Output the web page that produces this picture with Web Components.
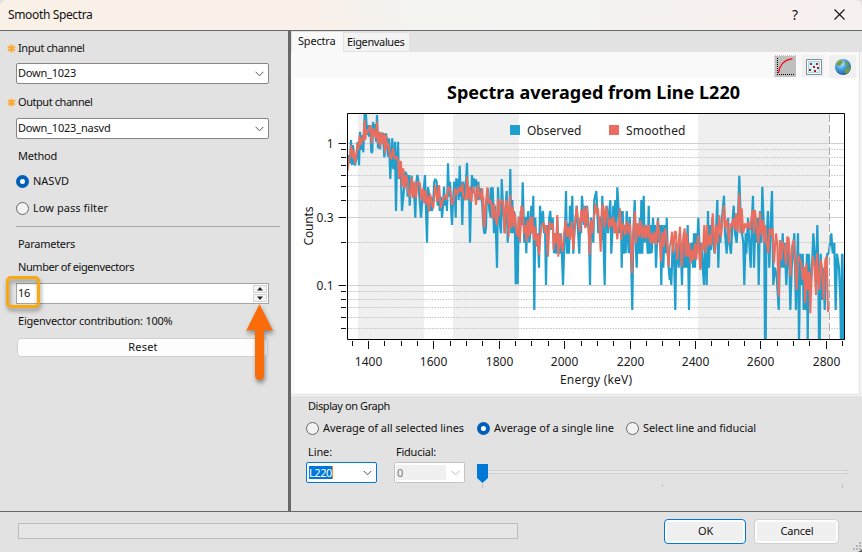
<!DOCTYPE html>
<html lang="en">
<head>
<meta charset="utf-8">
<title>Smooth Spectra</title>
<style>
  html, body { margin: 0; height: 100%; overflow: hidden; }
  body { font: 11px/14px "Noto Sans", "Open Sans", sans-serif; color: #111; background: #e2e2e2; }
</style>
</head>
<body>
<smooth-dialog></smooth-dialog>

<script>
// Shared base: attaches the shadow root and fills it from template()
class UiElement extends HTMLElement {
  constructor() {
    super();
    this.attachShadow({ mode: 'open' });
  }

  connectedCallback() {
    this.shadowRoot.innerHTML = this.template();
    this.ready();
  }

  ready() {}
}

// Single line of text tracked to a fixed advance width
class UiText extends UiElement {
  template() {
    return `
      <style>
        :host { display: block; white-space: nowrap; flex: none; }
        span { display: block; width: max-content; }
      </style>
      <span>${this.getAttribute('text')}</span>
    `;
  }

  ready() {
    const want = Number(this.getAttribute('w'));
    if (!want) return;
    const span = this.shadowRoot.querySelector('span');
    const n = this.getAttribute('text').length;
    const gap = (want - span.getBoundingClientRect().width) / n;
    span.style.letterSpacing = `${gap.toFixed(3)}px`;
  }
}
customElements.define('ui-text', UiText);

class TitleBar extends UiElement {
  template() {
    return `
      <style>
        :host {
          display: flex; align-items: center; box-sizing: border-box; height: 31px;
          padding: 0 17px 1px 8px; border-bottom: 1px solid #686868;
          background: linear-gradient(90deg, #f9f0e8 0, #f9f0e9 36%, #f3f3f0 48%, #f3f3f1 68%, #f7f0ef 86%, #f7f0f0 100%);
          border-radius: 7px 7px 0 0;
        }
        ui-text { font-size: 12px; }
        .help { margin-left: auto; margin-right: 36px; font-size: 14px; line-height: 16px; }
        svg { display: block; }
      </style>
      <ui-text text="Smooth Spectra" w="84.5"></ui-text>
      <ui-text class="help" text="?"></ui-text>
      <svg width="11" height="11" viewBox="0 0 11 11"><path d="M.5 .5l10 10M10.5 .5l-10 10" stroke="#111" stroke-width="1.1"/></svg>
    `;
  }
}
customElements.define('title-bar', TitleBar);

class FieldLabel extends UiElement {
  template() {
    return `
      <style>
        :host { display: flex; align-items: center; }
        svg { width: 9px; height: 9px; margin-right: 2px; }
      </style>
      <svg viewBox="0 0 9 9"><path d="M4.500 .5v8M1 2.300l7 4.400M8 2.300L1 6.700" stroke="#fbab35" stroke-width="2"/></svg>
      <slot></slot>
    `;
  }
}
customElements.define('field-label', FieldLabel);

class ComboBox extends UiElement {
  template() {
    return `
      <style>
        :host {
          display: flex; align-items: center; box-sizing: border-box; height: 21px;
          padding: 0 4px 0 1px; background: #fff; border: 1px solid #868686; border-radius: 2px;
        }
        :host([focused]) { border-color: #0078d7; padding-left: 2px; }
        :host([disabled]) { border-color: #c4c4c4; color: #777; }
        .value { display: flex; align-items: center; height: 15px; padding-bottom: 1px; }
        :host([focused]) .value { height: 13px; padding: 0; background: #0078d7; color: #fff; border-right: 1px solid #f08a30; }
        :host([disabled]) .value { width: 49px; padding: 0 0 0 1px; background: #f0f0f0; }
        svg { margin-left: auto; width: 9px; height: 6px; }
        path { fill: none; stroke: #555; }
        :host([disabled]) path { stroke: #bbb; }
      </style>
      <div class="value"><slot></slot></div>
      <svg viewBox="0 0 9 6"><path d="M.6 .8l3.9 4L8.4 .8"/></svg>
    `;
  }
}
customElements.define('combo-box', ComboBox);

class RadioOption extends UiElement {
  template() {
    return `
      <style>
        :host { display: flex; align-items: center; height: 17px; }
        i {
          box-sizing: border-box; width: 13px; height: 13px; margin-right: 4px; flex: none;
          border: 1px solid #666; border-radius: 50%; background: #f3f3f3;
        }
        :host([checked]) i { border: 4px solid #005fb8; background: #fff; }
        .label { padding-bottom: 1px; }
      </style>
      <i></i><div class="label"><slot></slot></div>
    `;
  }
}
customElements.define('radio-option', RadioOption);

class SpinBox extends UiElement {
  template() {
    return `
      <style>
        :host {
          display: flex; align-items: center; justify-content: space-between; box-sizing: border-box;
          height: 21px; padding: 0 1px; background: #fff; border: 1px solid #a3a3a3;
        }
        .value { padding-bottom: 2px; }
        .steps { display: flex; flex-direction: column; gap: 1px; }
        .steps svg { display: block; box-sizing: border-box; width: 14px; height: 8px; border: 1px solid #d4d4d4; background: #f4f4f4; }
      </style>
      <div class="value"><slot></slot></div>
      <div class="steps">
        <svg viewBox="0 0 12 6"><path d="M6 1l3 3.6H3z" fill="#222"/></svg>
        <svg viewBox="0 0 12 6"><path d="M6 5L3 1.4h6z" fill="#222"/></svg>
      </div>
    `;
  }
}
customElements.define('spin-box', SpinBox);

class PushButton extends UiElement {
  template() {
    return `
      <style>
        :host {
          display: flex; align-items: center; justify-content: center; box-sizing: border-box;
          padding: 0 0 1px 1px; background: #fdfdfd; border: 1px solid #d0d0d0; border-radius: 4px;
        }
        :host([large]) { height: 25px; background: #f0f0f0; box-shadow: inset 0 0 0 2px #fdfdfd; }
        :host([primary]) { border-color: #0078d7; }
      </style>
      <slot></slot>
    `;
  }
}
customElements.define('push-button', PushButton);

class SettingsPane extends UiElement {
  template() {
    return `
      <style>
        :host { display: block; position: relative; box-sizing: border-box; width: 288px; padding-top: 10px; }
        field-label { margin-left: 7px; margin-bottom: 8px; height: 14px; }
        combo-box, spin-box { width: 253px; margin-left: 16px; }
        .second { margin-top: 11px; margin-bottom: 9px; }
        .text { margin-left: 18px; height: 14px; }
        .method { margin-top: 10px; }
        radio-option { margin: 10px 0 0 16px; }
        hr { width: 264px; height: 1px; margin: 9px 0 0 16px; border: 0; background: #a6a6a6; }
        .params { margin-top: 10px; }
        .number { margin-top: 9px; margin-bottom: 9px; }
        .share { margin-top: 10px; }
        push-button { width: 251px; height: 19px; margin: 10px 0 0 17px; }
        /* callouts drawn above the controls */
        .ring {
          position: absolute; left: 6px; top: 245px; box-sizing: border-box; width: 34px; height: 32px;
          border: 3px solid #f7a90e; border-radius: 5px; filter: drop-shadow(1px 3px 2px rgba(0,0,0,.4));
        }
        .arrow { position: absolute; left: 240px; top: 267px; filter: drop-shadow(1px 3px 2px rgba(0,0,0,.4)); }
      </style>
      <field-label><ui-text text="Input channel" w="66.5"></ui-text></field-label>
      <combo-box><ui-text text="Down_1023" w="58"></ui-text></combo-box>
      <field-label class="second"><ui-text text="Output channel" w="74.5"></ui-text></field-label>
      <combo-box><ui-text text="Down_1023_nasvd" w="92.5"></ui-text></combo-box>
      <ui-text class="text method" text="Method" w="39"></ui-text>
      <radio-option checked><ui-text text="NASVD" w="36"></ui-text></radio-option>
      <radio-option><ui-text text="Low pass filter" w="75"></ui-text></radio-option>
      <hr>
      <ui-text class="text params" text="Parameters" w="57"></ui-text>
      <ui-text class="text number" text="Number of eigenvectors" w="116"></ui-text>
      <spin-box><ui-text text="16" w="12"></ui-text></spin-box>
      <ui-text class="text share" text="Eigenvector contribution: 100%" w="154.5"></ui-text>
      <push-button><ui-text text="Reset" w="29.5"></ui-text></push-button>
      <div class="ring"></div>
      <svg class="arrow" width="40" height="90" viewBox="0 0 40 90">
        <path d="M19.5 6L33 33Q26 31.500 24 32V77.500a4.500 4.500 0 0 1-9 0V32Q13 31.500 6 33z" fill="#fa6b0a"/>
      </svg>
    `;
  }
}
customElements.define('settings-pane', SettingsPane);

class TabStrip extends UiElement {
  template() {
    return `
      <style>
        :host { display: flex; align-items: flex-end; flex: none; height: 21px; padding-left: 1px; }
        .tab { display: flex; align-items: center; box-sizing: border-box; }
        .on { width: 51px; height: 20px; padding: 0 0 2px 6px; background: #f9f9f9; }
        .off { width: 65px; height: 18px; margin: 0 0 1px 1px; padding-left: 3px; background: #f3f3f3; }
      </style>
      <div class="tab on"><ui-text text="Spectra" w="37.5"></ui-text></div>
      <div class="tab off"><ui-text text="Eigenvalues" w="57.5"></ui-text></div>
    `;
  }
}
customElements.define('tab-strip', TabStrip);

class GraphTools extends UiElement {
  template() {
    return `
      <style>
        :host { display: flex; align-items: center; justify-content: flex-end; box-sizing: border-box; height: 26px; padding: 2px 3px 0 0; }
        svg { display: block; flex: none; }
      </style>
      <svg width="22" height="22" viewBox="0 0 22 22">
        <path fill="#bfbfbf" d="M0 0h22v22H0z"/>
        <path d="M0 .5h22M.5 0v22" stroke="#fff" stroke-dasharray="1 1"/>
        <path d="M3.500 3v17M3 19.500h17" stroke="#000" stroke-dasharray="1 1"/>
        <path d="M4.500 18C5 12 9 4.500 18.500 3.800" fill="none" stroke="#f00" stroke-width="1.2"/>
      </svg>
      <svg width="22" height="22" viewBox="0 0 22 22" style="margin-left:6px">
        <path fill="#f0f0f0" d="M0 0h22v22H0z"/>
        <path fill="#c9f4fb" stroke="#7b9299" d="M4.500 4.500h15v15h-15z"/>
        <path fill="none" stroke="#fff" d="M5.500 5.500h13v13h-13z"/>
        <path fill="none" stroke="#8fc8d6" stroke-width=".7" d="M6.400 6.400h11.200v11.200H6.400z"/>
        <path fill="#d01414" d="M8 8h2v2H8zM14 8h2v2h-2zM11 11h2v2h-2zM15 12h2v2h-2zM7 14h2v2H7zM12 15h2v2h-2z"/>
      </svg>
      <svg width="27" height="23" viewBox="0 0 27 23" style="margin-left:5px">
        <defs>
          <radialGradient id="sea" cx=".38" cy=".3" r=".8">
            <stop offset="0" stop-color="#cdeeff"/><stop offset=".4" stop-color="#4ea3e6"/><stop offset="1" stop-color="#11518f"/>
          </radialGradient>
        </defs>
        <path fill="#f0f0f0" d="M0 0h27v23H0z"/>
        <circle cx="14" cy="12" r="8" fill="url(#sea)"/>
        <path fill="#719b3d" d="M7.300 8.500Q9 5 12.500 4.800L14 6.500l-1 2-2 2.500-2.500-.5zM16 6l3 1.500 1.500 3-2 .5-2-2zM16 14l4-1.500 1.500-1q.3 4-3.500 7l-2.500-1z"/>
        <path fill="none" stroke="#9dc66a" stroke-width=".8" d="M8.600 8Q10 5.800 13 5.600"/>
      </svg>
    `;
  }
}
customElements.define('graph-tools', GraphTools);

// Trace points, three units to the pixel. Each chunk starts with its x offset.
const OBSERVED = [
  [0, '158,190 162,165 165,190 168,120 171,195 174,135 178,190 180,196 185,170 188,125 192,196 195,95 198,150 201,105 205,157 209,40 213,45 216,105 219,75 222,110 226,75 229,157 232,157 234,66 238,100 241,72 243,125 246,45 249,145 252,95 255,148 258,98 261,130 264,98 268,172 271,140 273,100 276,120 279,170 282,115 286,237 289,155 292,115 294,205 297,205 300,125 301,205 303,333 306,180 309,125 312,237 315,190 318,237 321,333 324,300 328,260 331,215 335,225 338,290 342,225 344,317 347,260 350,227 354,285 357,260 361,353 364,250 367,225 370,240 373,285 378,353 382,300 386,270 390,225 393,330 396,428 399,262 402,280 405,333 408,290 411,333 415,300 418,245 421,237 425,245 428,317 432,260 434,333 438,290 441,353 444,320 447,260 450,317 453,285 456,333 459,190 462,290 465,245 468,317 471,375 474,300 478,245 482,353 484,235 487,280 489,238 491,300 494,197 497,290 499,245 502,375 505,245 509,300 513,245 516,188 519,300 522,260 525,428 528,300 531,225 534,280 537,235 540,260 543,238 547,300 550,245 554,300 558,265 562,317 565,375 568,400'],
  [555, '16,398 18,380 20,300 24,265 28,330 32,353 33,262 36,330 38,262 42,400 45,317 48,400 51,503 54,262 57,333 60,375 63,400 65,237 68,300 71,353 74,400 78,300 80,273 83,428 86,330 88,375 91,207 94,400 97,300 99,400 102,333 105,400 107,553 110,400 113,553 116,350 119,428 122,333 125,375 128,247 131,353 133,428 136,350 139,460 142,360 145,333 148,428 151,400 154,317 157,400 160,287 163,630 166,353 169,430 173,400 177,503 180,317 183,375 186,350 189,333 192,400 195,375 198,555 201,375 204,428 208,353 211,333 214,390 218,353 222,460 225,400 229,461 232,353 235,430 239,461 242,400 246,470 249,555 252,460 255,400 258,273 261,461 264,370 267,461 270,317 274,400 277,287 280,461 283,400 287,353 290,317 293,375 298,461 301,353 303,400 306,287 309,333 312,375 315,317 318,380 321,317 324,353 327,400 330,555 333,353 336,375 340,428 343,300 349,273 352,333 355,400 358,375 361,350 364,420 367,287 370,400 374,555 377,350 380,317 384,400 388,330 391,300 394,461 397,400 400,317 403,375 406,300 409,400 412,262 416,333 419,400 423,333 425,503 428,333 431,461 434,375 437,460 440,333 443,400 446,460 449,350 452,428 457,630 460,400 464,300 467,430 470,503 473,375 476,461 479,353 482,461 484,300 487,461 491,287 494,428 497,375 500,400 503,461 506,317 509,461 512,375 515,460 519,353 522,428 525,375 528,503 531,430 534,353 538,428 541,375 544,555 547,375 550,503 554,375 558,460 560,353 563,460 566,503 569,540'],
  [1125, '1,503 4,555 8,428 12,460 16,630 19,430 22,460 26,503 29,400 33,460 36,555 39,430 43,503 46,400 49,503 53,375 57,630 60,430 63,460 66,428 69,503 72,400 75,503 78,400 81,460 85,353 88,430 91,503 94,428 98,503 102,555 105,400 110,555 114,333 117,503 120,375 123,450 127,353 130,428 134,461 138,400 142,300 145,503 148,400 151,428 154,375 158,333 162,287 165,400 170,461 174,353 178,430 183,461 187,375 191,317 195,400 200,428 204,353 208,227 212,353 216,400 220,428 223,555 227,400 229,461 234,353 238,428 242,503 246,353 249,287 252,503 256,375 259,428 263,353 266,555 270,333 274,428 277,260 281,375 283,430 285,730 287,730 289,430 294,333 298,503 302,375 306,273 310,555 315,503 320,530 326,630 330,430 334,503 338,400 341,503 344,428 349,555 353,461 357,430 361,630 365,503 369,460 373,400 378,630 381,500 384,400 387,730 391,461 394,555 398,461 401,630 405,503 408,630 411,461 413,730 416,461 422,555 426,503 430,400 434,461 438,555 442,375 445,500 447,730 449,730 452,461 456,600 460,503 464,630 468,500 472,461 476,461 480,430 484,400 488,460 493,428 497,630 501,461 507,503 511,600 513,730 516,461 518,730 520,600 522,730 524,461']
];

const SMOOTHED = [
  [0, '157,215 162,180 166,165 169,135 173,175 176,150 180,190 184,165 187,130 190,150 194,105 197,135 200,115 204,125 209,60 211,120 214,90 218,100 222,85 226,75 230,130 235,85 238,95 242,115 246,65 249,130 253,95 256,140 259,98 263,130 267,100 270,160 273,105 276,145 280,130 284,165 289,178 293,145 297,165 300,178 305,170 309,180 312,235 315,185 318,185 321,260 325,205 329,265 333,225 337,240 340,275 345,290 350,233 354,295 358,245 363,295 368,245 375,250 379,300 384,265 388,310 392,270 396,315 399,290 402,335 405,280 410,310 415,325 421,255 427,305 432,255 437,325 443,300 450,285 455,300 460,260 466,270 471,315 476,300 481,265 487,285 492,262 497,275 502,250 505,290 512,300 516,230 520,300 524,260 529,305 534,260 539,275 543,315 548,255 556,300 562,265 566,375'],
  [555, '10,290 13,385 17,320 22,262 26,310 32,300 35,320 38,357 42,310 46,350 51,375 54,295 57,350 61,305 66,300 70,320 74,400 78,300 82,310 86,410 90,285 94,385 98,320 102,380 105,340 110,400 114,410 117,350 120,425 124,317 128,325 132,400 136,375 139,425 143,360 147,410 151,350 154,400 157,350 162,420 166,380 170,440 174,400 177,465 180,420 184,385 189,370 192,370 196,400 199,375 204,470 208,365 213,385 218,370 221,450 225,400 229,430 232,345 235,470 240,400 245,440 248,455 252,400 257,360 261,410 266,380 270,420 275,365 280,450 285,370 290,320 295,370 300,395 304,330 308,365 312,320 316,385 320,320 325,380 329,465 333,360 337,400 341,360 347,310 351,345 354,325 358,375 362,455 366,320 370,315 374,380 378,320 383,350 387,385 392,355 396,380 400,350 403,400 407,365 412,418 416,375 420,325 424,420 428,370 432,380 436,405 440,365 446,400 450,370 456,520 460,400 465,335 468,430 472,370 477,410 481,360 486,415 491,375 495,415 499,375 503,415 507,375 511,430 516,400 520,430 524,395 529,435 533,360 538,400 543,485 547,395 551,440 556,385 561,430 566,500 569,440'],
  [1125, '2,430 6,395 10,460 14,395 18,395 22,480 26,430 30,380 35,500 40,410 44,385 47,470 50,400 54,470 58,430 62,490 66,450 70,480 75,430 79,480 84,405 88,460 91,510 95,430 99,450 103,375 107,460 111,375 115,440 120,405 124,435 128,340 132,400 135,460 139,375 143,430 148,345 153,410 157,370 162,317 166,385 172,360 177,430 182,370 186,380 190,355 194,390 198,340 203,395 208,280 211,400 215,325 220,400 225,370 230,385 235,365 240,390 244,355 248,330 252,400 255,330 260,380 265,430 270,335 274,405 278,360 282,430 286,375 290,430 295,460 299,385 303,405 308,385 312,490 318,400 322,430 326,590 330,420 334,480 338,425 343,440 348,495 352,410 356,415 361,530 366,440 371,420 375,480 380,570 385,465 390,480 394,490 398,540 402,500 406,610 409,490 413,570 417,515 421,640 425,520 429,470 433,490 438,585 441,460 444,530 448,570 452,480 456,500 461,600 466,480 470,470 474,635 477,620']
];

// Viewbox starts at the chart's top left corner, (295,78) in the dialog
class SpectraChart extends UiElement {
  trace(chunks) {
    return chunks.map(([x0, pts]) => pts.split(' ').map(p => {
      const [x, y] = p.split(',').map(Number);
      return `${((x + x0) / 3).toFixed(1)},${(22 + y / 3).toFixed(1)}`;
    }).join(' ')).join(' ');
  }

  yOf(v) {
    return Math.round(65 - 142 * Math.log10(v)) + 0.5;
  }

  xOf(kev) {
    return Math.floor(73.4 + (kev - 1400) * 0.3271) + 0.5;
  }

  grid() {
    let out = '';
    for (const v of [1, 0.9, 0.8, 0.7, 0.6, 0.5, 0.4, 0.3, 0.2, 0.1, 0.09, 0.08, 0.07, 0.06, 0.05]) {
      const major = v === 1 || v === 0.3 || v === 0.1;
      const y = this.yOf(v);
      out += `<path class="${major ? 'line' : 'dots'}" d="M53 ${y}H549"/>`;
      out += `<path class="tick" d="M${major ? 43.5 : 46} ${y}H51"/>`;
    }
    for (let kev = 1350; kev <= 2850; kev += 50) {
      out += `<path class="tick" d="M${this.xOf(kev)} 263V${kev % 200 ? 268 : 271}"/>`;
    }
    return out;
  }

  labels() {
    let out = '';
    for (let kev = 1400; kev <= 2800; kev += 200) {
      out += `<text x="${this.xOf(kev)}" y="288" text-anchor="middle" textLength="27.5">${kev}</text>`;
    }
    for (const v of [1, 0.3, 0.1]) {
      out += `<text x="38.5" y="${this.yOf(v) + 4.5}" text-anchor="end">${v}</text>`;
    }
    return out;
  }

  template() {
    return `
      <style>
        :host { display: block; width: 563px; height: 315px; background: #fff; }
        svg { display: block; }
        text { font: 12px "Noto Sans", "Open Sans", sans-serif; fill: #1c1c1c; }
        .title { font-size: 18px; font-weight: 700; fill: #000; }
        .line { stroke: #cfcfcf; }
        .dots { stroke: #c4c4c4; stroke-dasharray: 1.500 1.200; }
        .tick { stroke: #111; }
        polyline { fill: none; stroke-linejoin: bevel; }
      </style>
      <svg width="563" height="315" viewBox="0 0 563 315">
        <defs><clipPath id="plot"><path d="M52 35h498v227H52z"/></clipPath></defs>
        <text class="title" x="152" y="21" textLength="293">Spectra averaged from Line L220</text>
        <path fill="#efefef" d="M63 36h66v225H63zM158 36h66v225h-66zM403 36h131v225H403z"/>
        ${this.grid()}
        <g clip-path="url(#plot)">
          <polyline points="${this.trace(OBSERVED)}" stroke="#219fcc" stroke-width="2.2"/>
          <polyline points="${this.trace(SMOOTHED)}" stroke="#ea6e5f" stroke-width="2"/>
        </g>
        <path d="M534.500 36v225" stroke="#aaa" stroke-dasharray="8 3"/>
        <path d="M52.500 35.500h497v226h-497z" fill="none" stroke="#000"/>
        <path fill="#219fcc" d="M215 47h10v10h-10z"/>
        <path fill="#ea6e5f" d="M314 47h10v10h-10z"/>
        <text x="232" y="57" textLength="54.500">Observed</text>
        <text x="331" y="57" textLength="59.500">Smoothed</text>
        ${this.labels()}
        <text x="265" y="306" textLength="72">Energy (keV)</text>
        <text transform="translate(18 167.500) rotate(-90)" textLength="39">Counts</text>
      </svg>
    `;
  }
}
customElements.define('spectra-chart', SpectraChart);

class FiducialSlider extends UiElement {
  template() {
    return `
      <style>:host, svg { display: block; }</style>
      <svg width="372" height="26" viewBox="0 0 372 26">
        <path d="M.5 8.500h370v3H.5z" fill="#e7eaea" stroke="#d0d0d0"/>
        <path d="M5.500 22v4M185.500 22v3M365.500 22v4" stroke="#c0c0c0"/>
        <path d="M0 2h11v14l-5.500 5L0 16z" fill="#0078d7"/>
      </svg>
    `;
  }
}
customElements.define('fiducial-slider', FiducialSlider);

class DisplayOptions extends UiElement {
  template() {
    return `
      <style>
        :host { display: block; padding: 3px 0 0 15px; }
        .head { margin-left: 2px; }
        .modes { display: flex; margin-top: 7px; }
        .modes > :nth-child(1) { width: 171px; }
        .modes > :nth-child(2) { width: 149px; }
        .pick { display: flex; margin-top: 8px; }
        .field { width: 71px; margin-right: 17px; }
        .field > ui-text { margin: 0 0 3px 2px; }
        fiducial-slider { margin: 17px 0 0 -5px; }
      </style>
      <ui-text class="head" text="Display on Graph" w="82"></ui-text>
      <div class="modes">
        <radio-option><ui-text text="Average of all selected lines" w="141"></ui-text></radio-option>
        <radio-option checked><ui-text text="Average of a single line" w="120"></ui-text></radio-option>
        <radio-option><ui-text text="Select line and fiducial" w="113"></ui-text></radio-option>
      </div>
      <div class="pick">
        <div class="field">
          <ui-text text="Line:" w="24"></ui-text>
          <combo-box focused><ui-text text="L220" w="23"></ui-text></combo-box>
        </div>
        <div class="field">
          <ui-text text="Fiducial:" w="40"></ui-text>
          <combo-box disabled><ui-text text="0"></ui-text></combo-box>
        </div>
        <fiducial-slider></fiducial-slider>
      </div>
    `;
  }
}
customElements.define('display-options', DisplayOptions);

class GraphPane extends UiElement {
  template() {
    return `
      <style>
        :host { display: flex; flex-direction: column; flex: 1; min-width: 0; }
        .page { box-sizing: border-box; width: 569px; height: 343px; padding-left: 4px; background: #f9f9f9; border-right: 1px solid #e4e4e4; border-bottom: 1px solid #e4e4e4; }
        .frame { border-right: 2px solid #f3f3f3; border-bottom: 1px solid #f3f3f3; }
      </style>
      <tab-strip></tab-strip>
      <div class="frame">
        <div class="page">
          <graph-tools></graph-tools>
          <spectra-chart></spectra-chart>
        </div>
      </div>
      <display-options></display-options>
    `;
  }
}
customElements.define('graph-pane', GraphPane);

class DialogFooter extends UiElement {
  template() {
    return `
      <style>
        :host { display: flex; align-items: flex-start; box-sizing: border-box; height: 41px; padding: 7px 0 0 18px; border-top: 1px solid #686868; }
        .progress { box-sizing: border-box; width: 500px; height: 16px; margin: 4px 146px 0 0; border: 1px solid #bcbcbc; background: #e6e6e6; }
        .ok { width: 82px; margin-right: 8px; }
        .cancel { width: 85px; }
        svg { align-self: flex-end; margin-left: 13px; }
      </style>
      <div class="progress"></div>
      <push-button class="ok" large primary><ui-text text="OK" w="15"></ui-text></push-button>
      <push-button class="cancel" large><ui-text text="Cancel" w="33"></ui-text></push-button>
      <svg width="10" height="10" viewBox="0 0 10 10">
        <path fill="#b4b4b4" d="M7 0h2v2H7zM4 3h2v2H4zM7 3h2v2H7zM1 6h2v2H1zM4 6h2v2H4zM7 6h2v2H7z"/>
        <path fill="#5b554d" d="M10 7v3H5.500Q8.500 9.500 10 7z"/>
      </svg>
    `;
  }
}
customElements.define('dialog-footer', DialogFooter);

class SmoothDialog extends UiElement {
  template() {
    return `
      <style>
        :host { display: flex; flex-direction: column; width: 862px; height: 552px; background: #e2e2e2; }
        .main { display: flex; height: 480px; }
        .split { width: 3px; background: #686868; }
      </style>
      <title-bar></title-bar>
      <div class="main">
        <settings-pane></settings-pane>
        <div class="split"></div>
        <graph-pane></graph-pane>
      </div>
      <dialog-footer></dialog-footer>
    `;
  }
}
customElements.define('smooth-dialog', SmoothDialog);
</script>
</body>
</html>
